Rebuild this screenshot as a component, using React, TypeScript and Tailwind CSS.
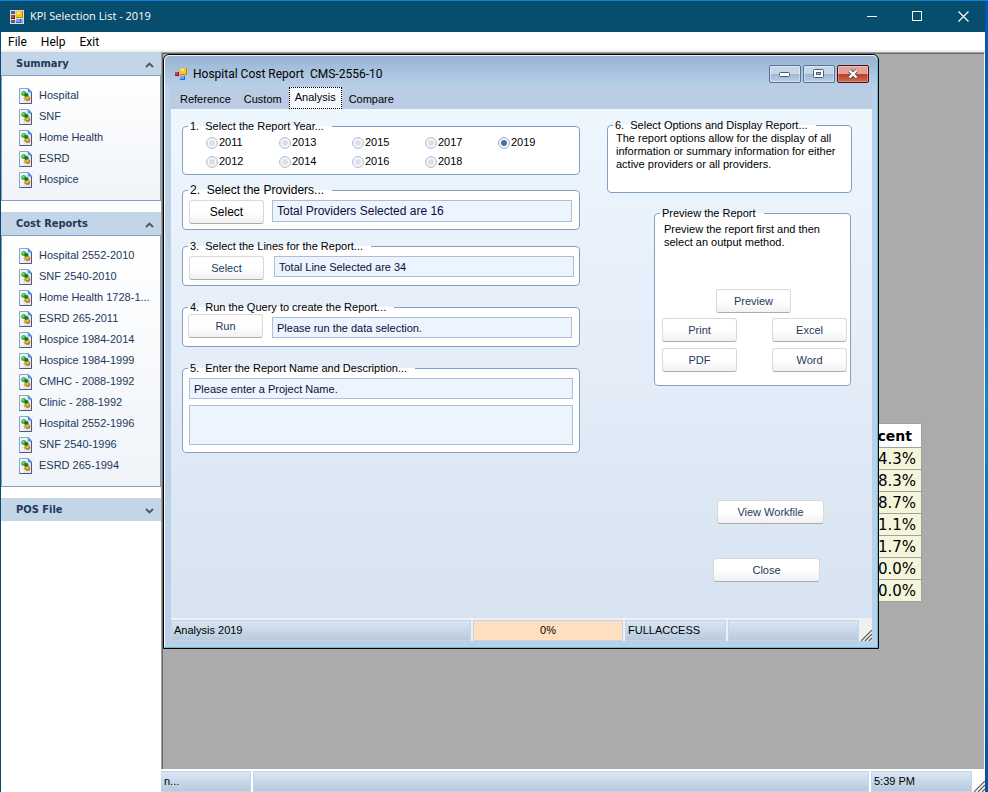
import { useState } from "react";
import type { ReactNode } from "react";
import clsx from "clsx";

const summaryLinks = ["Hospital", "SNF", "Home Health", "ESRD", "Hospice"];

const costReportLinks = [
  "Hospital 2552-2010",
  "SNF 2540-2010",
  "Home Health 1728-1...",
  "ESRD 265-2011",
  "Hospice 1984-2014",
  "Hospice 1984-1999",
  "CMHC - 2088-1992",
  "Clinic - 288-1992",
  "Hospital 2552-1996",
  "SNF 2540-1996",
  "ESRD 265-1994",
];

const years = ["2011", "2012", "2013", "2014", "2015", "2016", "2017", "2018", "2019"];
const percents = ["4.3%", "8.3%", "8.7%", "1.1%", "1.7%", "0.0%", "0.0%"];
const tabs = ["Reference", "Custom", "Analysis", "Compare"];

function AppIcon({ framed }: { framed?: boolean }) {
  return (
    <svg width="14" height="14" viewBox="0 0 14 14" shapeRendering="crispEdges" aria-hidden="true">
      {framed && (
        <>
          <rect width="14" height="14" fill="#d5dde4" />
          <path d="M1 1h4v3H1zM1 10h4v3H1z" fill="#4c6578" />
          <path d="M11 9h2v4h-2z" fill="#8fa3b3" />
        </>
      )}
      <rect x="1" y="5" width="4" height="4" fill="#8f1410" />
      <rect x="1" y="5" width="3" height="3" fill="#d9402e" />
      <rect x="6" y="1" width="7" height="7" fill="#c28a00" />
      <rect x="6" y="1" width="6" height="6" fill="#f8c52c" />
      <rect x="7" y="2" width="3" height="2" fill="#ffe68a" />
      <rect x="6" y="9" width="5" height="4" fill="#2f62c4" />
      <rect x="6" y="9" width="4" height="3" fill="#6ea2f4" />
    </svg>
  );
}

function PageIcon() {
  return (
    <svg width="14" height="16" viewBox="0 0 14 16" className="shrink-0" aria-hidden="true">
      <path d="M.5.5h9l3 3v12H.5z" fill="#d9e7f9" stroke="#8aa6d0" />
      <path d="M1 1h7l-4 14H1z" fill="#fff" opacity=".6" />
      <path d="M12.500 4v11.500H.5" fill="none" stroke="#54586e" />
      <path d="M8.500 0L13 4.500H9.500z" fill="#3f8be0" />
      <circle cx="4.700" cy="5.500" r="2.500" fill="#45b53a" />
      <circle cx="7.400" cy="7.200" r="2.100" fill="#1c7724" />
      <circle cx="8.700" cy="10.500" r="2.500" fill="#bf821b" />
      <circle cx="6.200" cy="10.600" r="1.500" fill="#d9a437" />
      <circle cx="8.600" cy="9.900" r="1.100" fill="#f2c75f" />
      <circle cx="4.200" cy="4.800" r=".9" fill="#8be07a" />
    </svg>
  );
}

function Chevron({ down }: { down?: boolean }) {
  return (
    <svg width="9" height="6" viewBox="0 0 9 6" fill="none" stroke="#4a5563" strokeWidth="1.800" aria-hidden="true">
      {down ? <path d="M1 1l3.500 3.500L8 1" /> : <path d="M1 5l3.500-3.500L8 5" />}
    </svg>
  );
}

function Grip({ className }: { className?: string }) {
  return (
    <svg width="11" height="11" viewBox="0 0 11 11" className={className} stroke="#555" strokeWidth="1.200" aria-hidden="true">
      <path d="M0 11L11 0M4 11L11 4M8 11L11 8" />
    </svg>
  );
}

function SideHeader({ title, down }: { title: string; down?: boolean }) {
  return (
    <button className="flex h-[23px] w-full items-center justify-between bg-[#c4d5e7] pt-[2px] pr-[7px] pl-[15px] font-['DejaVu_Sans_Condensed','DejaVu_Sans',sans-serif] text-[11px] font-bold text-[#1e395b]">
      {title}
      <Chevron down={down} />
    </button>
  );
}

function SideList({ items }: { items: string[] }) {
  return (
    <ul className="border border-[#829fc4] bg-linear-to-b from-white to-[#f0f4f9] pt-[9px] pb-[10px] pl-[17px]">
      {items.map((item) => (
        <li key={item} className="h-[21px]">
          <a href="#" className="flex h-full items-center gap-[6px] whitespace-nowrap text-[#1e395b]">
            <PageIcon />
            {item}
          </a>
        </li>
      ))}
    </ul>
  );
}

function Group({ title, className, children }: { title: string; className?: string; children: ReactNode }) {
  return (
    <fieldset className={clsx("min-w-0 rounded-[4px] border border-[#829fc4] bg-white", className)}>
      <legend className="ml-[5px] h-[14px] pr-[8px] pl-[2px] leading-[14px] whitespace-pre">{title}</legend>
      {children}
    </fieldset>
  );
}

function PushButton({ children, className }: { children: ReactNode; className?: string }) {
  return (
    <button
      className={clsx(
        "h-[24px] shrink-0 rounded-[3px] border border-[#d9d9dc] border-b-[#adadb0] bg-linear-to-b from-white from-50% to-[#f1f1f4]",
        className,
      )}
    >
      {children}
    </button>
  );
}

const fieldClass = "min-w-0 border border-[#abbfdb] bg-[#ecf5fd] px-[4px] text-[#0c0c3c]";
const panelClass = "flex items-center border border-[#c0d5ed] bg-linear-to-b from-[#dae6f4] to-[#b8cadd]";
const captionButton =
  "flex h-[18px] w-[32px] items-center justify-center rounded-[2px] border border-[#5d708e] bg-linear-to-b from-[#c5d7ea] from-50% via-[#9db8d6] via-50% to-[#b9d0e8] inset-ring inset-ring-white/40";

function CostReportWindow() {
  const [tab, setTab] = useState("Analysis");
  const [year, setYear] = useState("2019");

  return (
    <section className="absolute top-0 left-0 flex h-[595px] w-[716px] flex-col rounded-t-[6px] border border-black bg-[#bbd1ea] shadow-[inset_-1px_-1px_#53c4de,inset_1px_1px_#ffffff]">
      <header className="mx-px flex h-[31px] shrink-0 items-center gap-[5px] rounded-t-[5px] border-t border-white/70 bg-linear-to-b from-[#98b4d2] to-[#b8cfe9] pt-[5px] pr-[8px] pl-[9px]">
        <AppIcon />
        <h2 className="flex-1 font-['Roboto','Noto_Sans',sans-serif] text-[12px] whitespace-pre">
          Hospital Cost Report  CMS-2556-10
        </h2>
        <div className="flex gap-[2px]">
          <button aria-label="Minimize" className={captionButton}>
            <svg width="12" height="6" viewBox="0 0 12 6">
              <rect x=".5" y="1.500" width="10" height="4" rx="1" fill="#fff" stroke="#4e5c70" />
            </svg>
          </button>
          <button aria-label="Maximize" className={captionButton}>
            <svg width="12" height="10" viewBox="0 0 12 10">
              <rect x=".5" y=".5" width="10" height="8" rx="1" fill="#fff" stroke="#4e5c70" />
              <rect x="3.500" y="3.500" width="4" height="2" fill="#a9c3de" stroke="#4e5c70" />
            </svg>
          </button>
          <button
            aria-label="Close window"
            className="flex h-[18px] w-[32px] items-center justify-center rounded-[2px] border border-[#4b1016] bg-linear-to-b from-[#e5a198] from-50% via-[#b93c26] via-50% to-[#d0684f] inset-ring inset-ring-white/30"
          >
            <svg width="12" height="10" viewBox="0 0 12 10">
              <path d="M2.500 1.500l7 7M9.500 1.500l-7 7" stroke="#5a4a5c" strokeWidth="4" />
              <path d="M2.500 1.500l7 7M9.500 1.500l-7 7" stroke="#fff" strokeWidth="2.400" />
            </svg>
          </button>
        </div>
      </header>

      <div className="mr-[6px] mb-[7px] ml-[7px] flex min-h-0 flex-1 flex-col">
        <nav className="flex h-[23px] items-end gap-[1px] bg-[#bacbe4] pl-[3px]">
          {tabs.map((name) => (
            <button
              key={name}
              onClick={() => setTab(name)}
              className={clsx(
                "px-[5px]",
                tab === name
                  ? "h-[22px] border border-dotted border-black bg-[#f7fbff] pb-[2px]"
                  : "h-[20px] border border-transparent",
              )}
            >
              {name}
            </button>
          ))}
        </nav>

        <div className="flex min-h-0 flex-1 gap-[27px] bg-linear-to-b from-[#eef6fe] via-[#e4edf8] to-[#d7e3f1] pr-[20px] pl-[11px]">
          <div className="flex min-w-0 flex-1 flex-col pt-[10px]">
            <Group title="1.  Select the Report Year..." className="h-[56px]">
              <div className="grid grid-flow-col grid-cols-[repeat(5,73px)] grid-rows-[repeat(2,19px)] pl-[23px]">
                {years.map((y) => (
                  <label key={y} className="flex items-center gap-[1px]">
                    <input
                      type="radio"
                      name="year"
                      checked={year === y}
                      onChange={() => setYear(y)}
                      className="size-[12px] appearance-none rounded-full border border-[#b3c5dd] bg-[#dcdfe5] bg-clip-content p-[2px] inset-ring inset-ring-[#dbe4f0] checked:border-[#a3b6d2] checked:bg-[#4f6d9c]"
                    />
                    {y}
                  </label>
                ))}
              </div>
            </Group>

            <Group title="2.  Select the Providers..." className="mt-[8px] h-[47px] text-[12px]">
              <div className="flex gap-[8px] pt-[3px] pr-[7px] pl-[6px]">
                <PushButton className="w-[75px]">Select</PushButton>
                <input aria-label="Providers" readOnly value="Total Providers Selected are 16" className={clsx(fieldClass, "h-[22px] flex-1")} />
              </div>
            </Group>

            <Group title="3.  Select the Lines for the Report..." className="mt-[9px] h-[47px]">
              <div className="flex gap-[10px] pt-[3px] pr-[5px] pl-[6px]">
                <PushButton className="w-[75px] text-[#1e395b]">Select</PushButton>
                <input aria-label="Lines" readOnly value="Total Line Selected are 34" className={clsx(fieldClass, "h-[21px] flex-1")} />
              </div>
            </Group>

            <Group title="4.  Run the Query to create the Report..." className="mt-[14px] h-[47px]">
              <div className="flex items-end gap-[9px] pr-[7px] pl-[5px]">
                <PushButton className="w-[75px] text-[#1e395b]">Run</PushButton>
                <input aria-label="Query" readOnly value="Please run the data selection." className={clsx(fieldClass, "h-[21px] flex-1")} />
              </div>
            </Group>

            <Group title="5.  Enter the Report Name and Description..." className="mt-[14px] h-[92px]">
              <div className="flex flex-col gap-[6px] px-[6px] pt-[3px]">
                <input aria-label="Report name" defaultValue="Please enter a Project Name." className={clsx(fieldClass, "h-[21px]")} />
                <textarea aria-label="Description" className={clsx(fieldClass, "h-[40px] resize-none")} />
              </div>
            </Group>
          </div>

          <div className="flex w-[245px] shrink-0 flex-col items-end pt-[9px]">
            <Group title="6.  Select Options and Display Report..." className="h-[75px] w-full">
              <p className="pr-[4px] pl-[8px] leading-[13px]">
                The report options allow for the display of all information or summary information for either active
                providers or all providers.
              </p>
            </Group>

            <Group title="Preview the Report" className="mt-[13px] mr-[1px] h-[180px] w-[197px]">
              <div className="flex flex-col pt-[3px] pr-[3px] pl-[7px] text-[#1e395b]">
                <p className="pr-[20px] pl-[2px] leading-[13px] text-black">
                  Preview the report first and then select an output method.
                </p>
                <PushButton className="mt-[40px] mr-[2px] w-[75px] self-center">Preview</PushButton>
                <div className="mt-[5px] grid grid-cols-[75px_75px] justify-between gap-y-[6px]">
                  <PushButton>Print</PushButton>
                  <PushButton>Excel</PushButton>
                  <PushButton>PDF</PushButton>
                  <PushButton>Word</PushButton>
                </div>
              </div>
            </Group>

            <PushButton className="mt-[114px] mr-[28px] w-[107px] text-[#1e395b]">View Workfile</PushButton>
            <PushButton className="mt-[34px] mr-[32px] w-[107px] text-[#1e395b]">Close</PushButton>
          </div>
        </div>

        <footer className="flex h-[23px] shrink-0 gap-[2px] bg-[#f0f0f0] pt-[2px]">
          <div className={clsx(panelClass, "flex-1 pl-[2px]")}>Analysis 2019</div>
          <div className="flex w-[150px] items-center justify-center border border-[#c0d5ed] bg-[#ffdfbf]">0%</div>
          <div className={clsx(panelClass, "w-[101px] pl-[2px]")}>FULLACCESS</div>
          <div className={clsx(panelClass, "w-[131px]")} />
          <Grip className="self-end" />
        </footer>
      </div>
    </section>
  );
}

export default function App() {
  return (
    <div className="flex h-screen flex-col overflow-hidden bg-[#074d6e] font-['Liberation_Sans',Arial,sans-serif] text-[11px] text-black">
      {/* sliver of the desktop above the window */}
      <div className="h-px shrink-0 bg-[#0a84d8]" />
      <div className="flex min-h-0 flex-1">
        <div className="flex min-w-0 flex-1 flex-col">
          <header className="flex h-[31px] shrink-0 items-center gap-[6px] pl-[10px] font-['Open_Sans','Noto_Sans',sans-serif] text-[11px] text-white">
            <AppIcon framed />
            <h1 className="flex-1">KPI Selection List - 2019</h1>
            <button aria-label="Minimize" className="flex h-full w-[39px] items-center justify-center">
              <svg width="11" height="11" stroke="#fff" shapeRendering="crispEdges">
                <path d="M0 5.500h10" />
              </svg>
            </button>
            <button aria-label="Maximize" className="flex h-full w-[39px] items-center justify-center">
              <svg width="11" height="11" stroke="#fff" fill="none" shapeRendering="crispEdges">
                <rect x=".5" y=".5" width="9" height="9" />
              </svg>
            </button>
            <button aria-label="Close" className="flex h-full w-[42px] items-center justify-center pr-[2px]">
              <svg width="11" height="11" stroke="#fff" strokeWidth="1.200">
                <path d="M.5.5l10 10M10.500.5l-10 10" />
              </svg>
            </button>
          </header>

          <div className="ml-px flex min-h-0 flex-1 flex-col bg-white">
            <nav className="flex h-[20px] shrink-0 items-center gap-[14px] border-b-2 border-[#f0f0f0] pt-[2px] pl-[7px] font-['Roboto','Noto_Sans',sans-serif] text-[12px]">
              <button>File</button>
              <button>Help</button>
              <button>Exit</button>
            </nav>

            <div className="flex min-h-0 flex-1">
              <aside className="flex w-[160px] shrink-0 flex-col gap-[11px] bg-white">
                <div>
                  <SideHeader title="Summary" />
                  <SideList items={summaryLinks} />
                </div>
                <div>
                  <SideHeader title="Cost Reports" />
                  <SideList items={costReportLinks} />
                </div>
                <SideHeader title="POS File" down />
              </aside>

              <div className="flex min-w-0 flex-1 flex-col">
                <main className="flex min-h-0 flex-1 border-t border-r border-l border-t-[#a0a0a0] border-r-white border-l-[#a0a0a0]">
                  <div className="relative flex-1 overflow-hidden border-t border-l border-[#696969] bg-[#ababab]">
                    <table className="absolute top-[369px] left-[706px] w-[53px] border-collapse text-right font-['DejaVu_Sans',Verdana,sans-serif] text-[15px]">
                      <thead>
                        <tr className="h-[24px] bg-white">
                          <th className="border border-[#a0a0a0] pr-[9px] text-[14px] leading-[20px] font-bold">cent</th>
                        </tr>
                      </thead>
                      <tbody>
                        {percents.map((p, i) => (
                          <tr key={i} className="h-[22px] bg-[#f5f5dc]">
                            <td className="border border-[#a0a0a0] pr-[5px] leading-[20px]">{p}</td>
                          </tr>
                        ))}
                      </tbody>
                    </table>
                    <CostReportWindow />
                  </div>
                </main>
                <footer className="flex h-[23px] shrink-0 gap-[2px] pt-[2px]">
                  <div className={clsx(panelClass, "w-[90px] border-l-0 pl-[3px]")}>n...</div>
                  <div className={clsx(panelClass, "flex-1")} />
                  <div className={clsx(panelClass, "w-[101px] pl-[2px]")}>5:39 PM</div>
                  <Grip className="self-end" />
                </footer>
              </div>
            </div>
          </div>
        </div>
        <div className="w-[3px] bg-linear-to-b from-[#0a50b4] via-[#1283cf] to-[#0a4fa0]" />
      </div>
    </div>
  );
}
